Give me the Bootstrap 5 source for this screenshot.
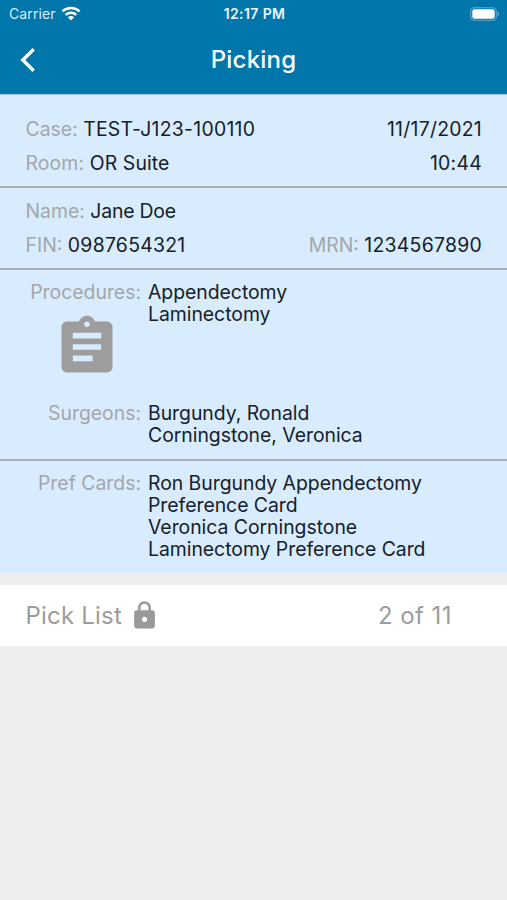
<!DOCTYPE html>
<html lang="en">
<head>
<meta charset="utf-8">
<meta name="viewport" content="width=device-width, initial-scale=1">
<title>Picking</title>
<link href="https://cdn.jsdelivr.net/npm/bootstrap@5.3.0/dist/css/bootstrap.min.css" rel="stylesheet">
<style>
body{font-family:Inter,"Liberation Sans",sans-serif;background:#eee;color:#15202a;font-size:19.4px;line-height:22px;overflow:hidden}
.topbar{background:#0076ab;height:94px;color:#fff;box-shadow:0 1px 1px rgba(0,60,90,.2)}
.status{height:28px;line-height:28px;padding:0 7px 0 9px}
.status-side{flex:1 1 0}
.carrier{font-size:14px;letter-spacing:.1px;color:#d9edf8}
.clock{font-size:14px;letter-spacing:.4px;color:#eaf6fc}
.wifi{margin:-2px 0 0 5px}
.battery{margin-top:-1px}
.titlebar{height:64px;padding:0 20px}
.titlebar h1{font-size:24px;line-height:30px;font-weight:500;letter-spacing:.2px}
.back{width:60px}
.panel{background:#d9ecfe}
.section{border-bottom:2px solid #a9b0b6;padding:0 25px 0 25.5px}
.section-case{height:94px;padding-top:24px}
.section-patient{height:82px;padding-top:12px}
.section-proc{height:190.5px;padding:11px 0 0}
.section-pref{height:112px;padding:11.5px 0 0;border:0}
.line-gap{margin-bottom:12px}
.lbl{color:#a2a7ab}
.lblcol{width:141px;flex:none}
.valcol{padding-left:7px;letter-spacing:-.03px}
.procs{height:121px}
.clip{margin:10px 20.5px 0 0}
.digits{letter-spacing:.27px}
.room{letter-spacing:.12px}
.person{letter-spacing:-.2px}
.picklist{height:61px;margin-top:12.5px;padding:0 55px 0 25.5px;font-size:24px;line-height:30px;color:#9c9c9c}
.pick-label{letter-spacing:.2px}
.pick-count{letter-spacing:.45px}
.lock{margin-left:7px}
.nw span,.nw{white-space:nowrap}
</style>
<script src="https://cdn.jsdelivr.net/npm/bootstrap@5.3.0/dist/js/bootstrap.bundle.min.js"></script>
</head>
<body>
<header class="topbar position-relative">
  <div class="status d-flex align-items-center">
    <div class="status-side d-flex align-items-center">
      <span class="carrier">Carrier</span>
      <svg class="wifi" width="20" height="15" viewBox="0 0 20 15" fill="none" stroke="#fff" stroke-width="2.5"><path d="M1.5 5.3a12.3 12.3 0 0 1 17 0M4.7 8.8a7.7 7.7 0 0 1 10.6 0"/><path d="M10 14.5 6.9 11.2a4.4 4.4 0 0 1 6.2 0z" fill="#fff" stroke="none"/></svg>
    </div>
    <span class="clock fw-semibold">12:17 PM</span>
    <div class="status-side d-flex justify-content-end">
      <svg class="battery" width="30" height="14" viewBox="0 0 30 14"><rect x=".7" y=".7" width="25.6" height="12.6" rx="3.8" fill="none" stroke="#66acce" stroke-width="1.1"/><rect x="2.3" y="2.3" width="22.4" height="9.4" rx="2.3" fill="#fff"/><path d="M27.6 4.8q1.7.6 1.7 2.2t-1.7 2.2z" fill="#66acce"/></svg>
    </div>
  </div>
  <div class="titlebar d-flex align-items-center justify-content-between">
    <a class="back d-flex" href="#" aria-label="Back"><svg width="16" height="26" viewBox="0 0 16 26" fill="none" stroke="#fff" stroke-width="3.4"><path d="M13.7 2.2 2.8 13l10.9 10.8"/></svg></a>
    <h1 class="mb-0">Picking</h1>
    <span class="back"></span>
  </div>
</header>
<main>
  <div class="panel">
    <section class="section section-case nw">
      <div class="d-flex justify-content-between line-gap"><span><span class="lbl">Case:</span> <span class="digits">TEST-J123-100110</span></span><span class="digits">11/17/2021</span></div>
      <div class="d-flex justify-content-between"><span class="room"><span class="lbl">Room:</span> <span>OR Suite</span></span><span class="digits">10:44</span></div>
    </section>
    <section class="section section-patient nw">
      <div class="line-gap"><span class="lbl">Name:</span> <span class="person">Jane Doe</span></div>
      <div class="d-flex justify-content-between"><span><span class="lbl">FIN:</span> <span class="digits">0987654321</span></span><span><span class="lbl">MRN:</span> <span class="digits">1234567890</span></span></div>
    </section>
    <section class="section section-proc">
      <div class="procs d-flex">
        <div class="lblcol text-end"><div class="lbl">Procedures:</div><svg class="clip" width="68" height="68" viewBox="0 0 24 24" fill="#9d9d9d"><path d="M19 3h-4.18C14.4 1.84 13.3 1 12 1c-1.3 0-2.4.84-2.82 2H5c-1.1 0-2 .9-2 2v14c0 1.1.9 2 2 2h14c1.1 0 2-.9 2-2V5c0-1.1-.9-2-2-2zm-7 0c.55 0 1 .45 1 1s-.45 1-1 1-1-.45-1-1 .45-1 1-1zm2 14H7v-2h7v2zm3-4H7v-2h10v2zm0-4H7V7h10v2z"/></svg></div>
        <div class="valcol">Appendectomy<br>Laminectomy</div>
      </div>
      <div class="d-flex">
        <div class="lblcol text-end lbl">Surgeons:</div>
        <div class="valcol">Burgundy, Ronald<br>Corningstone, Veronica</div>
      </div>
    </section>
    <section class="section section-pref d-flex">
      <div class="lblcol text-end lbl">Pref Cards:</div>
      <div class="valcol nw">Ron Burgundy Appendectomy<br>Preference Card<br>Veronica Corningstone<br>Laminectomy Preference Card</div>
    </section>
  </div>
  <div class="picklist bg-white d-flex align-items-center justify-content-between nw">
    <span class="d-flex align-items-center"><span class="pick-label">Pick List</span><svg class="lock" width="31" height="31" viewBox="0 0 24 24" fill="#999"><path d="M18 8h-1V6c0-2.76-2.24-5-5-5S7 3.24 7 6v2H6c-1.1 0-2 .9-2 2v10c0 1.1.9 2 2 2h12c1.1 0 2-.9 2-2V10c0-1.1-.9-2-2-2zm-6 9c-1.1 0-2-.9-2-2s.9-2 2-2 2 .9 2 2-.9 2-2 2zm3.1-9H8.9V6c0-1.71 1.39-3.1 3.1-3.1 1.71 0 3.1 1.39 3.1 3.1v2z"/></svg></span>
    <span class="pick-count">2 of 11</span>
  </div>
</main>
</body>
</html>
